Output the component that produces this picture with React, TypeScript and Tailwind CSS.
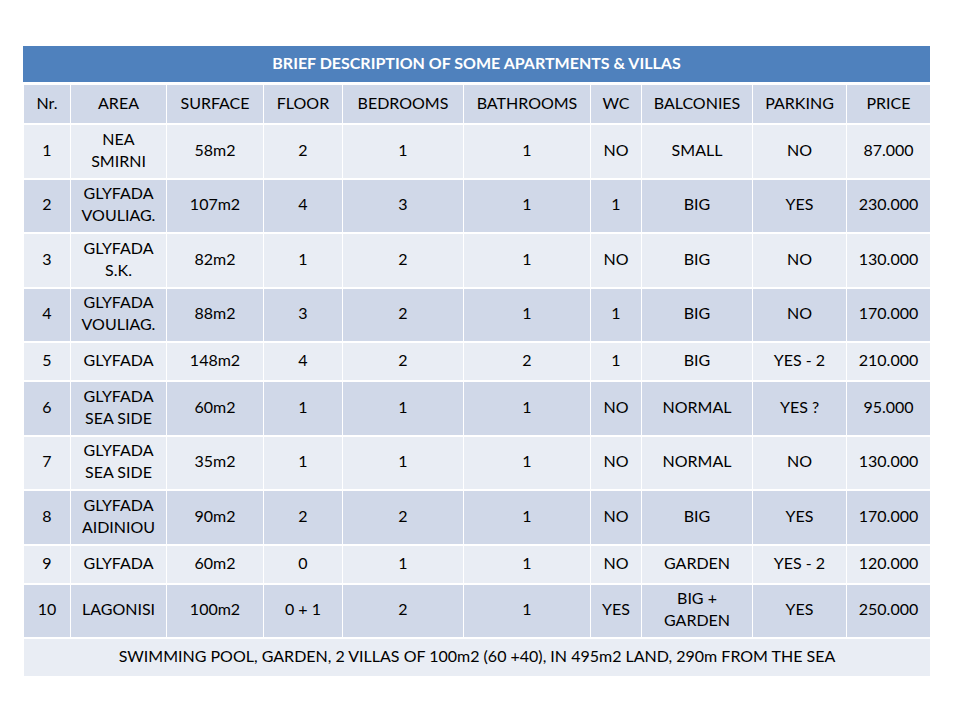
const columns = [
  { label: 'Nr.', width: 'w-[47px]' },
  { label: 'AREA', width: 'w-[96px]' },
  { label: 'SURFACE', width: 'w-[97px]' },
  { label: 'FLOOR', width: 'w-[79px]' },
  { label: 'BEDROOMS', width: 'w-[121px]' },
  { label: 'BATHROOMS', width: 'w-[127px]' },
  { label: 'WC', width: 'w-[51px]' },
  { label: 'BALCONIES', width: 'w-[111px]' },
  { label: 'PARKING', width: 'w-[94px]' },
  { label: 'PRICE', width: 'w-[84px]' },
]

type Row = { cells: string[][]; tall: boolean }

const rows: Row[] = [
  { tall: true, cells: [['1'], ['NEA', 'SMIRNI'], ['58m2'], ['2'], ['1'], ['1'], ['NO'], ['SMALL'], ['NO'], ['87.000']] },
  { tall: true, cells: [['2'], ['GLYFADA', 'VOULIAG.'], ['107m2'], ['4'], ['3'], ['1'], ['1'], ['BIG'], ['YES'], ['230.000']] },
  { tall: true, cells: [['3'], ['GLYFADA', 'S.K.'], ['82m2'], ['1'], ['2'], ['1'], ['NO'], ['BIG'], ['NO'], ['130.000']] },
  { tall: true, cells: [['4'], ['GLYFADA', 'VOULIAG.'], ['88m2'], ['3'], ['2'], ['1'], ['1'], ['BIG'], ['NO'], ['170.000']] },
  { tall: false, cells: [['5'], ['GLYFADA'], ['148m2'], ['4'], ['2'], ['2'], ['1'], ['BIG'], ['YES - 2'], ['210.000']] },
  { tall: true, cells: [['6'], ['GLYFADA', 'SEA SIDE'], ['60m2'], ['1'], ['1'], ['1'], ['NO'], ['NORMAL'], ['YES ?'], ['95.000']] },
  { tall: true, cells: [['7'], ['GLYFADA', 'SEA SIDE'], ['35m2'], ['1'], ['1'], ['1'], ['NO'], ['NORMAL'], ['NO'], ['130.000']] },
  { tall: true, cells: [['8'], ['GLYFADA', 'AIDINIOU'], ['90m2'], ['2'], ['2'], ['1'], ['NO'], ['BIG'], ['YES'], ['170.000']] },
  { tall: false, cells: [['9'], ['GLYFADA'], ['60m2'], ['0'], ['1'], ['1'], ['NO'], ['GARDEN'], ['YES - 2'], ['120.000']] },
  { tall: true, cells: [['10'], ['LAGONISI'], ['100m2'], ['0 + 1'], ['2'], ['1'], ['YES'], ['BIG +', 'GARDEN'], ['YES'], ['250.000']] },
]

export default function App() {
  return (
    <div className="min-h-[720px] w-[960px] bg-white pt-[46px] pl-[23px] font-['Lato',sans-serif] text-[16px] leading-[22px] text-black">
      <div className="w-[907px]">
        <div className="flex h-[36px] items-center justify-center bg-[#4f81bd] pb-[2px] font-bold text-white">
          BRIEF DESCRIPTION OF SOME APARTMENTS &amp; VILLAS
        </div>

        <table className="mt-[1px] w-[907px] table-fixed border-collapse">
          <colgroup>
            {columns.map((col) => (
              <col key={col.label} className={col.width} />
            ))}
          </colgroup>
          <thead>
            <tr className="h-[40px] bg-[#d0d8e8]">
              {columns.map((col) => (
                <th key={col.label} className="border-y-2 border-x border-white p-0 pb-[2px] text-center font-normal">
                  {col.label}
                </th>
              ))}
            </tr>
          </thead>
          <tbody>
            {rows.map((row, i) => (
              <tr
                key={i}
                className={`${row.tall ? 'h-[54.5px]' : 'h-[39px]'} ${i % 2 === 0 ? 'bg-[#e9edf4]' : 'bg-[#d0d8e8]'}`}
              >
                {row.cells.map((lines, j) => (
                  <td key={j} className="border-y-2 border-x border-white p-0 pb-[3px] text-center align-middle">
                    {lines.map((line) => (
                      <div key={line}>{line}</div>
                    ))}
                  </td>
                ))}
              </tr>
            ))}
            <tr className="h-[39px] bg-[#e9edf4]">
              <td colSpan={10} className="border-y-2 border-x border-white p-0 pb-[3px] text-center">
                SWIMMING POOL, GARDEN, 2 VILLAS OF 100m2 (60 +40), IN 495m2 LAND, 290m FROM THE SEA
              </td>
            </tr>
          </tbody>
        </table>
      </div>
    </div>
  )
}
